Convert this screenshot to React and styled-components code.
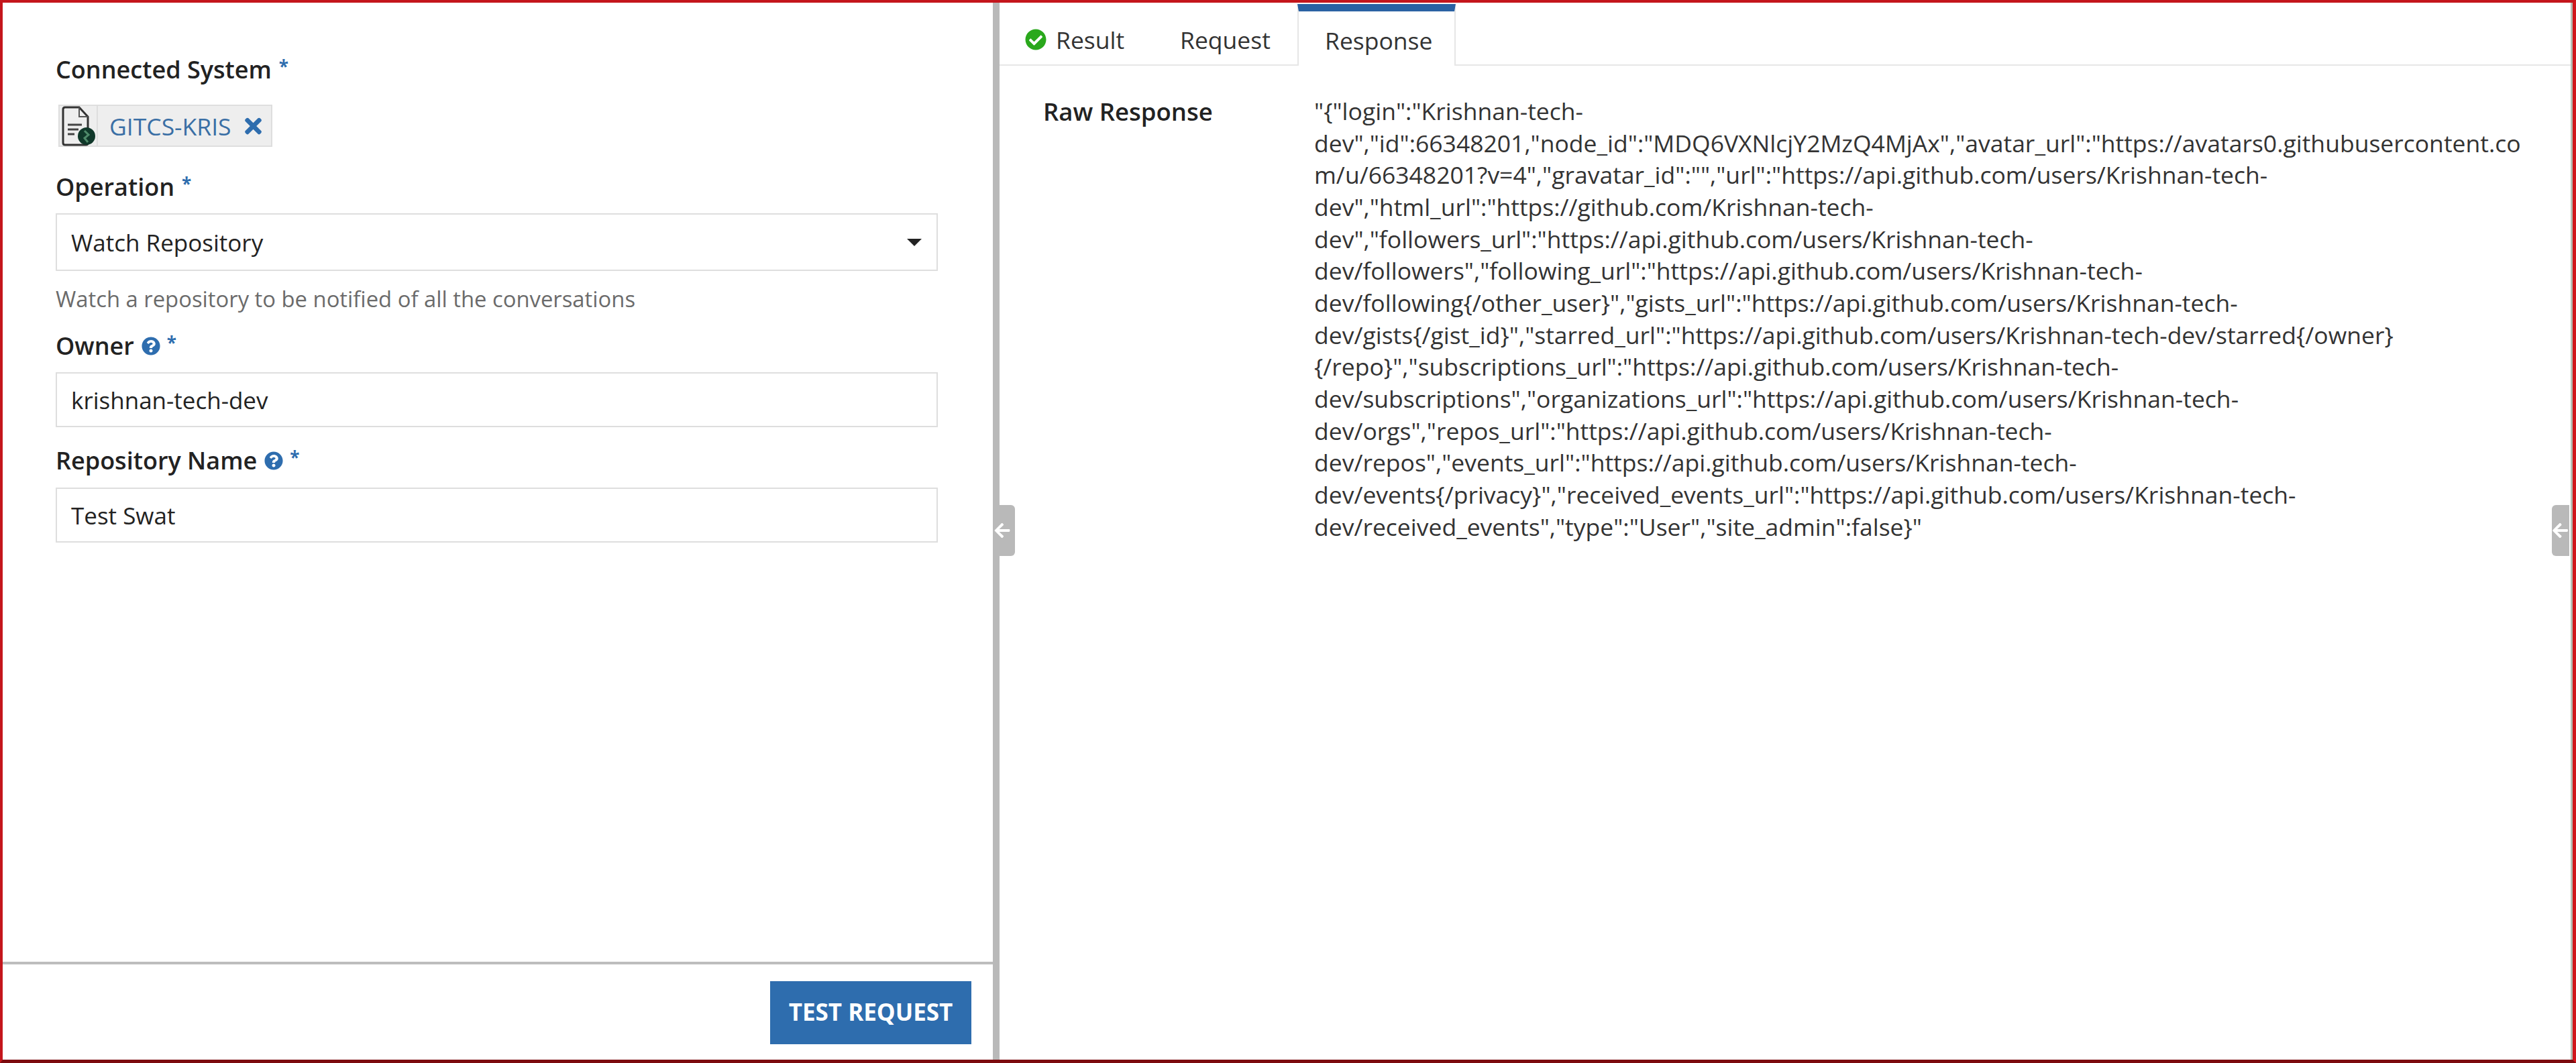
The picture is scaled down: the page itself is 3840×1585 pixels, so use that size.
import React from "react";
import styled, { createGlobalStyle } from "styled-components";
import { FaCheckCircle, FaQuestionCircle, FaTimes, FaArrowLeft } from "react-icons/fa";

const Global = createGlobalStyle`
  html, body { margin: 0; padding: 0; background: #fff; }
  body { font-family: "Open Sans", "Liberation Sans", sans-serif; color: #222; }
  * { box-sizing: border-box; }
`;

const Frame = styled.div`
  position: relative;
  width: 3840px;
  height: 1585px;
  display: flex;
  overflow: hidden;
  background: #fff;
  border-style: solid;
  border-width: 4px 5px 5px 4px;
  border-color: #c4161c #d0161c #7c0a0e #c4161c;
`;
const BorderNotch = styled.div`
  position: absolute;
  left: 3072px;
  bottom: -5px;
  width: 48px;
  height: 5px;
  background: #fbe4e4;
`;
const LeftPane = styled.section`
  width: 1476px;
  flex: none;
  display: flex;
  flex-direction: column;
`;
const Form = styled.div`
  flex: 1;
  padding: 76px 0 0 79px;
`;
const Field = styled.div`
  width: 1315px;
  margin-bottom: ${(p) => p.$after ?? 26}px;
`;
const Label = styled.div`
  display: flex;
  align-items: center;
  font-size: 36px;
  line-height: 48px;
  font-weight: 600;
  color: #222;
  margin-bottom: ${(p) => p.$below ?? 16}px;
`;
const Req = styled.span`
  color: #2e6dae;
  font-weight: 700;
  font-size: 26px;
  line-height: 26px;
  align-self: flex-start;
  margin-left: ${(p) => p.$left ?? 11}px;
  margin-top: 6px;
`;
const Help = styled(FaQuestionCircle)`
  color: #2e6dae;
  width: 28px;
  height: 28px;
  margin-left: 11px;
`;
const Chip = styled.div`
  display: flex;
  width: fit-content;
  align-items: stretch;
  height: 63px;
  margin-left: 4px;
  background: #eeeeee;
  border: 2px solid #dedede;
`;
const ChipIcon = styled.span`
  width: 57px;
  display: flex;
  align-items: center;
  justify-content: center;
  border-right: 2px solid #dedede;
`;
const ChipText = styled.span`
  display: flex;
  align-items: center;
  font-size: 35.5px;
  color: #3a6fa5;
  padding: 0 14px 0 17px;
  gap: 20px;
`;
const ChipClose = styled(FaTimes)`
  width: 25px;
  height: 36px;
  color: #2e6dae;
`;
const Control = styled.div`
  display: flex;
  align-items: center;
  justify-content: space-between;
  height: ${(p) => p.$height ?? 82}px;
  padding: 0 22px 0 21px;
  border: 2px solid #dedede;
  background: #fff;
  font-size: 35px;
  color: #222;
`;
const Caret = styled.span`
  width: 0;
  height: 0;
  border-left: 11px solid transparent;
  border-right: 11px solid transparent;
  border-top: 11px solid #222;
`;
const HelperText = styled.div`
  margin-top: 22px;
  font-size: 32.8px;
  line-height: 40px;
  color: #6b6b6b;
`;
const Footer = styled.div`
  height: 146px;
  flex: none;
  display: flex;
  justify-content: flex-end;
  padding: 25px 32px 0 0;
  border-top: 4px solid #bdbdbd;
`;
const PrimaryButton = styled.button`
  width: 300px;
  height: 94px;
  border: 0;
  padding: 0 0 3px;
  background: #2e6dae;
  color: #fff;
  font-family: inherit;
  font-size: 35px;
  font-weight: 700;
`;
const Divider = styled.div`
  position: relative;
  width: 10px;
  flex: none;
  background: #b9b9b9;
`;
const Handle = styled.div`
  position: absolute;
  top: 749px;
  left: ${(p) => p.$left}px;
  width: ${(p) => p.$width}px;
  height: 76px;
  display: flex;
  align-items: center;
  justify-content: ${(p) => p.$justify};
  background: #b9b9b9;
  border-radius: ${(p) => p.$radius};
  color: #fff;
  font-size: 26px;
  padding: ${(p) => p.$padding};
  z-index: 1;
`;
const RightPane = styled.section`
  flex: 1;
  min-width: 0;
  position: relative;
  display: flex;
  flex-direction: column;
  border-right: 3px solid #b5bdb5;
`;
const TabBar = styled.nav`
  height: 94px;
  flex: none;
  display: flex;
  border-bottom: 2px solid #e6e6e6;
  padding-top: 2px;
`;
const Tab = styled.div`
  display: flex;
  align-items: center;
  gap: 14px;
  height: ${(p) => (p.$active ? "92px" : "90px")};
  width: ${(p) => p.$width}px;
  padding-left: ${(p) => p.$pad}px;
  padding-top: 4px;
  font-size: 35.5px;
  color: #333;
  background: #fff;
  border-top: ${(p) => (p.$active ? "11px solid #2a62a3" : "11px solid transparent")};
  border-left: ${(p) => (p.$active ? "2px solid #e6e6e6" : "0")};
  border-right: ${(p) => (p.$active ? "2px solid #e6e6e6" : "0")};
`;
const CheckIcon = styled(FaCheckCircle)`
  color: #2aa81c;
  width: 32px;
  height: 32px;
`;
const ResponseRow = styled.div`
  display: flex;
  padding: 44px 0 0 65px;
`;
const FieldName = styled.div`
  width: 404px;
  flex: none;
  font-size: 36.5px;
  line-height: 48px;
  font-weight: 600;
  color: #222;
`;
const RawBody = styled.div`
  font-size: 35.5px;
  line-height: 47.66px;
  color: #333;
  white-space: pre;
`;

const lines = [
  `"{"login":"Krishnan-tech-`,
  `dev","id":66348201,"node_id":"MDQ6VXNlcjY2MzQ4MjAx","avatar_url":"https://avatars0.githubusercontent.co`,
  `m/u/66348201?v=4","gravatar_id":"","url":"https://api.github.com/users/Krishnan-tech-`,
  `dev","html_url":"https://github.com/Krishnan-tech-`,
  `dev","followers_url":"https://api.github.com/users/Krishnan-tech-`,
  `dev/followers","following_url":"https://api.github.com/users/Krishnan-tech-`,
  `dev/following{/other_user}","gists_url":"https://api.github.com/users/Krishnan-tech-`,
  `dev/gists{/gist_id}","starred_url":"https://api.github.com/users/Krishnan-tech-dev/starred{/owner}`,
  `{/repo}","subscriptions_url":"https://api.github.com/users/Krishnan-tech-`,
  `dev/subscriptions","organizations_url":"https://api.github.com/users/Krishnan-tech-`,
  `dev/orgs","repos_url":"https://api.github.com/users/Krishnan-tech-`,
  `dev/repos","events_url":"https://api.github.com/users/Krishnan-tech-`,
  `dev/events{/privacy}","received_events_url":"https://api.github.com/users/Krishnan-tech-`,
  `dev/received_events","type":"User","site_admin":false}"`,
];

const FileGlobeIcon = () => (
  <svg width="52" height="60" viewBox="0 0 52 60" fill="none">
    <path d="M3 5 Q3 2 6 2 H27 L40 16 V55 Q40 58 37 58 H6 Q3 58 3 55 Z" stroke="#333" strokeWidth="3" fill="none" />
    <path d="M27 2 V16 H40" stroke="#555" strokeWidth="2" fill="none" />
    <path d="M10 28 H31 M10 35 H26 M10 42 H20" stroke="#444" strokeWidth="3" />
    <circle cx="38" cy="45" r="13" fill="#10382a" />
    <path d="M35 37 L41 43 L35 48 L40 54" stroke="#4f8a6a" strokeWidth="3" fill="none" />
  </svg>
);

export default function App() {
  return (
    <>
      <Global />
      <Frame>
        <LeftPane>
          <Form>
            <Field $after={36}>
              <Label $below={28}>Connected System<Req>*</Req></Label>
              <Chip>
                <ChipIcon><FileGlobeIcon /></ChipIcon>
                <ChipText>GITCS-KRIS<ChipClose /></ChipText>
              </Chip>
            </Field>
            <Field>
              <Label $below={15}>Operation<Req>*</Req></Label>
              <Control $height={86}>Watch Repository<Caret /></Control>
              <HelperText>Watch a repository to be notified of all the conversations</HelperText>
            </Field>
            <Field>
              <Label $below={15}>Owner<Help /><Req $left={10}>*</Req></Label>
              <Control>krishnan-tech-dev</Control>
            </Field>
            <Field>
              <Label $below={16}>Repository Name<Help /><Req $left={10}>*</Req></Label>
              <Control>Test Swat</Control>
            </Field>
          </Form>
          <Footer>
            <PrimaryButton>TEST REQUEST</PrimaryButton>
          </Footer>
        </LeftPane>
        <Divider>
          <Handle $left={0} $width={33} $justify="center" $padding="0 6px 0 0" $radius="0 6px 6px 0"><FaArrowLeft /></Handle>
        </Divider>
        <RightPane>
          <TabBar>
            <Tab $width={196} $pad={38}><CheckIcon />Result</Tab>
            <Tab $width={248} $pad={73}>Request</Tab>
            <Tab $active $width={236} $pad={39}>Response</Tab>
          </TabBar>
          <ResponseRow>
            <FieldName>Raw Response</FieldName>
            <RawBody>
              {lines.map((l) => (<div key={l}>{l}</div>))}
            </RawBody>
          </ResponseRow>
          <Handle $left={2314} $width={26} $justify="flex-end" $padding="0 1px 0 0" $radius="6px 0 0 6px"><FaArrowLeft /></Handle>
        </RightPane>
        <BorderNotch />
      </Frame>
    </>
  );
}
